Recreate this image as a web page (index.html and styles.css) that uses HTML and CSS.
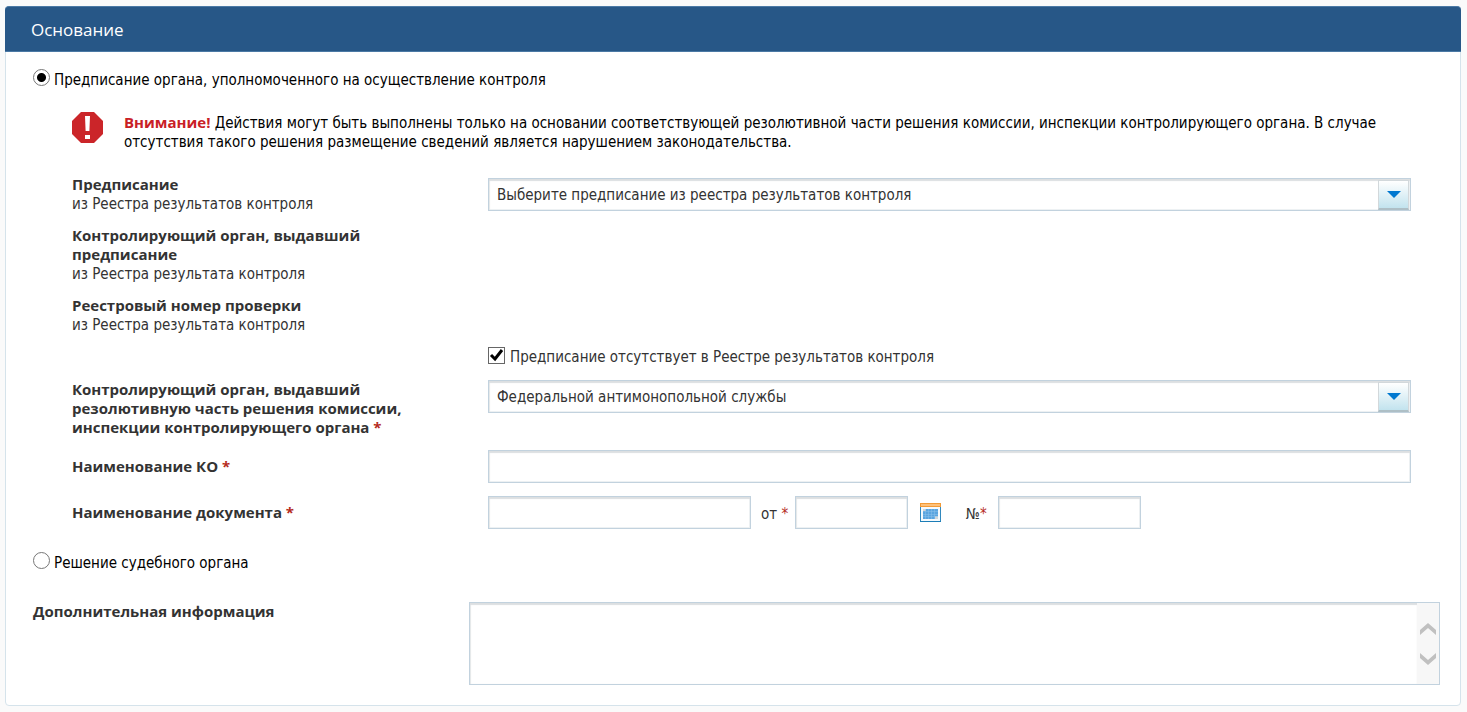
FILE: index.html
```html
<!DOCTYPE html>
<html lang="ru">
<head>
<meta charset="utf-8">
<meta name="viewport" content="width=device-width, initial-scale=1">
<title>Основание</title>
<link rel="stylesheet" href="styles.css">
</head>
<body>
<form class="panel">
  <h1 class="panel-title">Основание</h1>
  <div class="panel-body">
    <label class="option"><input class="radio" type="radio" name="basis" checked><span class="option-text">Предписание органа, уполномоченного на осуществление контроля</span></label>

    <div class="details">
      <div class="notice">
        <svg class="notice-icon" viewBox="0 0 31 31" aria-hidden="true"><path fill="#cb2529" d="M9 0h13l9 9v13l-9 9H9l-9-9V9z"/><path fill="#fff" d="M13 4h5l-.6 15h-3.800zM13 23h5v4h-5z"/></svg>
        <p class="notice-text"><strong class="notice-lead">Внимание!</strong> Действия могут быть выполнены только на основании соответствующей резолютивной части решения комиссии, инспекции контролирующего органа. В случае отсутствия такого решения размещение сведений является нарушением законодательства.</p>
      </div>

      <div class="row row-registry row-select">
        <label class="label" for="order"><b>Предписание</b><span class="hint">из Реестра результатов контроля</span></label>
        <div class="select">
          <select class="control" id="order"><option>Выберите предписание из реестра результатов контроля</option></select>
          <span class="select-arrow"><svg width="14" height="8" viewBox="0 0 14 8" aria-hidden="true"><path fill="#0078d0" d="M0 0h14L7 7z"/></svg></span>
        </div>
      </div>
      <div class="row row-registry">
        <div class="label"><b>Контролирующий орган, выдавший предписание</b><span class="hint">из Реестра результата контроля</span></div>
      </div>
      <div class="row row-registry">
        <div class="label"><b>Реестровый номер проверки</b><span class="hint">из Реестра результата контроля</span></div>
      </div>
      <div class="row">
        <label class="check"><span class="tick"><input class="checkbox" type="checkbox" checked><svg class="tick-mark" viewBox="0 0 17 17" aria-hidden="true"><path fill="none" stroke="#000" stroke-width="3" d="M3 8l4 4 7-9"/></svg></span><span class="check-text">Предписание отсутствует в Реестре результатов контроля</span></label>
      </div>
      <div class="row">
        <label class="label" for="authority"><b>Контролирующий орган, выдавший резолютивную часть решения комиссии, инспекции контролирующего органа <span class="required">*</span></b></label>
        <div class="select">
          <select class="control" id="authority"><option>Федеральной антимонопольной службы</option></select>
          <span class="select-arrow"><svg width="14" height="8" viewBox="0 0 14 8" aria-hidden="true"><path fill="#0078d0" d="M0 0h14L7 7z"/></svg></span>
        </div>
      </div>
      <div class="row row-input">
        <label class="label" for="ko"><b>Наименование КО <span class="required">*</span></b></label>
        <input class="control" id="ko" type="text">
      </div>
      <div class="row row-input">
        <label class="label" for="doc"><b>Наименование документа <span class="required">*</span></b></label>
        <div class="document">
          <input class="control doc-name" id="doc" type="text">
          <label class="date-label" for="date">от <span class="required">*</span></label>
          <input class="control doc-date" id="date" type="text">
          <button class="calendar" type="button" aria-label="Календарь"><svg width="21" height="19" viewBox="0 0 21 19" aria-hidden="true">
            <path fill="#3289be" d="M0 4h21v15H0z"/><path fill="#f5fafd" d="M1 4h19v14H1z"/><path fill="#f39a35" d="M0 0h21v4H0z"/><path fill="#fdc079" d="M1 1h19v2H1z"/>
            <path fill="#5ba5df" d="M6 6h12v7h-3v3H3V8h3z"/><path fill="#d3d7da" d="M3 6h3v2H3zM15 13h3v3h-3z"/><path fill="none" stroke="#8cc0ea" stroke-width=".5" d="M5.500 6v10M8.500 6v10M11.500 6v10M14.500 6v10M3 8.500h15M3 11.500h15M3 13.500h15"/><path fill="#1c7db7" d="M0 18h21v1H0z"/>
          </svg></button>
          <label class="number-label" for="number">№<span class="required">*</span></label>
          <input class="control doc-number" id="number" type="text">
        </div>
      </div>
    </div>

    <label class="option"><input class="radio" type="radio" name="basis"><span class="option-text">Решение судебного органа</span></label>

    <div class="extra">
      <label for="extra"><b>Дополнительная информация</b></label>
      <div class="area">
        <textarea class="area-text" id="extra"></textarea>
        <div class="scroll" aria-hidden="true">
          <svg width="16" height="12" viewBox="0 0 16 12"><path fill="#c0c0c0" d="M8 0l8 7v5L8 5l-8 7V7z"/></svg>
          <svg width="16" height="12" viewBox="0 0 16 12"><path fill="#c0c0c0" d="M8 12l8-7V0L8 7 0 0v5z"/></svg>
        </div>
      </div>
    </div>
  </div>
</form>
</body>
</html>
```
FILE: styles.css
```css
* { box-sizing: border-box; }
body {
  margin: 0;
  padding: 6px 6px 6px 5px;
  background: #fafafa;
  color: #333;
  font: 15px/19px "DejaVu Sans Condensed", Tahoma, sans-serif;
}
b, strong { font-family: "Open Sans", "Noto Sans", sans-serif; }
.panel {
  border: 1px solid #d5e3eb;
  border-radius: 4px;
  background: #fff;
}
.panel-title {
  margin: -1px -1px 0;
  padding: 13px 26px 12px;
  border: 1px solid #4b79a5;
  border-width: 1px 0;
  border-radius: 4px 4px 0 0;
  background: #275787;
  color: #fff;
  font-family: "Open Sans", "Noto Sans", sans-serif;
  font-size: 17px;
  font-weight: 400;
  line-height: 19px;
}
.panel-body { padding: 17px 20px 20px 27px; }
.option { display: flex; gap: 4px; align-items: flex-start; color: #000; }
.option-text { padding-top: 2px; }
.radio {
  appearance: none;
  width: 17px;
  height: 17px;
  margin: 0;
  border: 1px solid #777;
  border-radius: 50%;
  background: #fff;
}
.radio:checked { background: radial-gradient(circle, #000 4px, #fff 5px); }
.details { margin: 22px 29px 23px 39px; }
.notice { display: flex; gap: 21px; margin-bottom: 23px; color: #000; }
.notice-icon { flex: none; width: 31px; height: 31px; }
.notice-text { margin: 0; padding-top: 1px; }
.notice-lead { color: #c92026; }
.row {
  display: grid;
  grid-template-columns: 360px minmax(0, 1fr);
  column-gap: 56px;
  align-items: start;
  margin-bottom: 13px;
}
.row-registry { margin-bottom: 12px; }
.label b, .hint { display: block; }
.hint { padding-top: 1px; }
.required { color: #b52b1d; }
.control {
  width: 100%;
  height: 33px;
  padding: 2px 8px 0;
  border: 1px solid #c2d2de;
  border-radius: 0;
  background: #fff;
  box-shadow: inset 0 2px 1px #dcdfe1, inset 1px 0 1px #e5e8ea, inset -1px -1px 0 #eef2f4;
  color: #333;
  font: inherit;
}
.select { position: relative; }
.select .control { display: block; appearance: none; }
.select-arrow {
  position: absolute;
  top: 2px;
  right: 2px;
  bottom: 1px;
  width: 31px;
  display: grid;
  place-items: center;
  border: 1px solid #d2d8db;
  border-bottom: 2px solid #aebfc6;
  background: linear-gradient(#fff, #c2e3ee);
  pointer-events: none;
}
.row-select .select { margin-top: 3px; }
.check { grid-column: 2; display: flex; gap: 5px; align-items: flex-start; }
.check-text { padding-top: 1px; }
.tick { position: relative; width: 17px; height: 17px; }
.checkbox {
  appearance: none;
  display: block;
  width: 17px;
  height: 17px;
  margin: 0;
  border: 1px solid #666;
  background: #fff;
}
.tick-mark { position: absolute; inset: 0; opacity: 0; pointer-events: none; }
.checkbox:checked + .tick-mark { opacity: 1; }
.row-input { align-items: center; }
.document { display: flex; align-items: center; }
.doc-name { width: 263px; }
.date-label { width: 44px; padding: 4px 0 0 10px; white-space: nowrap; }
.doc-date { width: 113px; }
.calendar { display: block; margin: 0 25px 0 12px; padding: 0; border: 0; background: none; }
.calendar svg { display: block; }
.number-label { width: 32px; padding-top: 4px; }
.doc-number { width: 143px; }
.extra {
  display: grid;
  grid-template-columns: 436px minmax(0, 1fr);
  margin-top: 29px;
}
.area { display: flex; height: 83px; border: 1px solid #c2d2de; }
.area-text {
  flex: 1;
  min-width: 0;
  padding: 6px 8px;
  border: 0;
  background: #fff;
  box-shadow: inset 0 2px 1px #dcdfe1, inset 1px 0 1px #e5e8ea;
  color: inherit;
  font: inherit;
  resize: none;
}
.scroll {
  width: 22px;
  display: flex;
  flex-direction: column;
  align-items: center;
  justify-content: center;
  gap: 18px;
  background: #f7f7f7;
}
```
